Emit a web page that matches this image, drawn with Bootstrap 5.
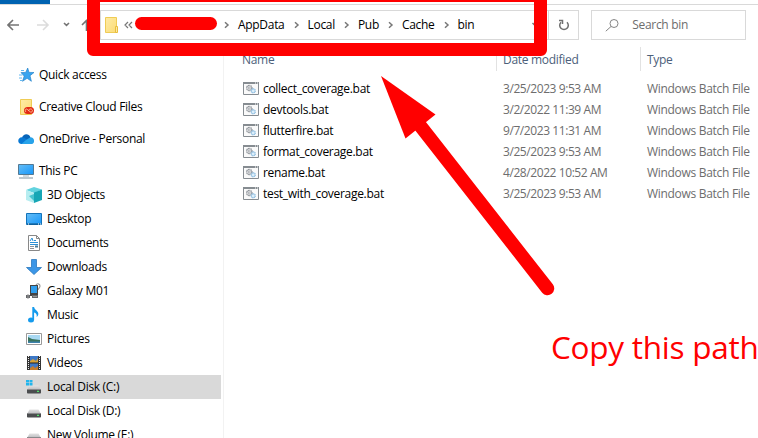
<!DOCTYPE html>
<html lang="en">
<head>
<meta charset="utf-8">
<meta name="viewport" content="width=device-width, initial-scale=1">
<title>bin</title>
<link href="https://cdn.jsdelivr.net/npm/bootstrap@5.3.0/dist/css/bootstrap.min.css" rel="stylesheet">
<style>
body{width:758px;height:438px;overflow:hidden;background:#fff;color:#000;font:12px/16px "Open Sans","Noto Sans",sans-serif;letter-spacing:-.3px;white-space:nowrap}
svg{display:block;flex:none}
.tabline{height:5px;border-bottom:1px solid #d9d9d9}
.tabline span{width:50px;height:4px;background:#0063b1}
.toolbar{height:42px;padding:5px 12px 7px 0}
.history{width:100px;padding-left:7px}
.address{width:450px;border:1px solid #d9d9d9;padding-left:4px}
.masked{width:82px;height:13px;border-radius:7px;background:red;margin:-4px 7px 0 0}
.crumb{margin-right:9px}
.sep{margin-right:8px}
.reload{width:30px;border:1px solid #d9d9d9;border-left:0}
.finder{width:155px;margin-left:12px;border:1px solid #d9d9d9;color:#6d6d6d;padding-left:13px}
.places{width:224px;height:391px;padding-top:16px;border-right:1px solid #f2f2f2}
.place{height:24px;width:221px;padding-left:18px;gap:5px}
.place.root{margin-bottom:8px}
.place.root.pc{margin-bottom:0}
.place.sub{padding-left:26px}
.place.current{background:#d9d9d9}
.heads{height:24px;color:#4c607a;margin-bottom:7px}
.heads>div{padding-top:5px}
.c-name{width:273px;padding-left:19px}
.c-date{width:144px;padding-left:6px}
.c-type{padding-left:6px}
.heads .c-name{padding-left:18px}
.heads .c-name,.heads .c-date{border-right:1px solid #e2e2e2}
.file{height:21px;color:#6d6d6d}
.file .c-name{color:#000;gap:4px}
.file .c-date{letter-spacing:-.42px}
.frame{left:87px;top:-11px;width:460px;height:67px;border:13px solid red;border-radius:6px}
.pointer{left:0;top:0}
.note{left:551px;top:325px;font-size:31.5px;line-height:44px;color:red;letter-spacing:-.25px}
</style>
</head>
<body class="position-relative">
<svg width="0" height="0" class="position-absolute" aria-hidden="true">
<defs>
<linearGradient id="fold" x1="0" y1="0" x2="1" y2="1"><stop stop-color="#ffeba5"/><stop offset="1" stop-color="#fbdc77"/></linearGradient>
<linearGradient id="blue" x1="0" y1="0" x2="1" y2="1"><stop stop-color="#66bdf5"/><stop offset="1" stop-color="#1597fb"/></linearGradient>
<linearGradient id="metal" x1="0" y1="0" x2="0" y2="1"><stop stop-color="#e3e3e3"/><stop offset="1" stop-color="#b9b9bd"/></linearGradient>
<symbol id="bat" viewBox="0 0 16 14"><path d="M.5.5h15v12H.5z" fill="#fafafa" stroke="#868c91"/><path d="M0 0h16v2H0z" fill="#868c91"/><path d="M12 1h1m1 0h1" stroke="#fff"/><circle cx="6.3" cy="6" r="2.6" fill="#eee" stroke="#858b92" stroke-width="1.4" stroke-dasharray="1 .5"/><circle cx="6.3" cy="6" r="1" fill="none" stroke="#8b9198" stroke-width=".6"/><circle cx="10.2" cy="8.8" r="2" fill="#dceefa" stroke="#80b5dc" stroke-width="1.2" stroke-dasharray="1 .4"/></symbol>
<symbol id="chev" viewBox="0 0 6 8"><path d="M1 1.2 4 4 1 6.8" fill="none" stroke="#777" stroke-width="1.5"/></symbol>
<symbol id="disk" viewBox="0 0 16 16"><path d="M3.500 6.500h9L15 11H1z" fill="url(#metal)"/><rect x="1" y="10" width="14" height="4.500" rx=".8" fill="#4b4d4f"/><path d="M1 10h14v1H1z" fill="#88898b"/><path d="M11 12.300h2" stroke="#50e66b" stroke-width="1.2"/></symbol>
</defs>
</svg>

<div class="tabline"><span class="d-block"></span></div>
<header class="toolbar d-flex">
  <div class="history d-flex align-items-center">
    <svg width="93" height="30" viewBox="7 10 93 30" fill="none" stroke="#747474" stroke-width="1.6"><path d="M8 25h11M13 20l-5 5 5 5"/><path d="M37 25h11M43 20l5 5-5 5" stroke="#dcdcdc"/><path d="M64 23l2.500 2.300L69 23"/><path d="M86.500 31V20.500M82 25l4.500-4.500L91 25"/></svg>
  </div>
  <div class="address d-flex align-items-center">
    <svg width="14" height="18" viewBox="0 0 14 18"><path d="M.5 1.500h11v15H.5z" fill="url(#fold)" stroke="#efcc55"/><path d="M10.500 10.500h2v6h-2z" fill="#ffe9a0" stroke="#e8bd3e"/></svg>
    <svg class="ms-1" width="12" height="10" viewBox="0 0 12 10"><path d="M5 2 2 5l3 3M9 2 6 5l3 3" fill="none" stroke="#777" stroke-width="1.2"/></svg>
    <span class="masked"></span>
    <svg class="sep" width="6" height="8"><use href="#chev"/></svg><span class="crumb">AppData</span>
    <svg class="sep" width="6" height="8"><use href="#chev"/></svg><span class="crumb">Local</span>
    <svg class="sep" width="6" height="8"><use href="#chev"/></svg><span class="crumb">Pub</span>
    <svg class="sep" width="6" height="8"><use href="#chev"/></svg><span class="crumb">Cache</span>
    <svg class="sep" width="6" height="8"><use href="#chev"/></svg><span>bin</span>
    <svg class="ms-auto me-2" width="9" height="6" viewBox="0 0 9 6"><path d="M1.500 1 4.500 4l3-3" fill="none" stroke="#777" stroke-width="1.500"/></svg>
  </div>
  <div class="reload d-flex align-items-center justify-content-center"><svg width="12" height="14" viewBox="0 0 12 14" fill="none" stroke="#707070" stroke-width="1.500"><path d="M9 4.200A4.300 4.300 0 1 1 3 4.200"/><path d="M1 2.500h3.500V6"/></svg></div>
  <div class="finder d-flex align-items-center"><svg width="15" height="14" viewBox="0 0 15 14" fill="none" stroke="#858585"><circle cx="9" cy="5.500" r="4"/><path d="M6 8.500.8 13.200"/></svg><span class="search-text ps-2 ms-1">Search bin</span></div>
</header>

<main class="d-flex">
<nav class="places">
  <div class="place root d-flex align-items-center"><svg width="16" height="16"><path d="m9.700 1 1.300 4.400 5 .1-4 3.200 1.400 5.600-4.300-3-4.600 3 1.700-5.200L3 5.600l4.700-.2z" fill="#38a4ef" stroke="#1679c4" stroke-width=".6"/><path d="M3 3.500h3M1 8h3.500M1 11h3M2 13.500h2" stroke="#62b9f2"/></svg><span>Quick access</span></div>
  <div class="place root d-flex align-items-center"><svg width="16" height="16"><path d="M2.500.5h11v15h-11z" fill="url(#fold)" stroke="#efcc55"/><rect x="6" y="8" width="10" height="7" rx="3.500" fill="#e32913"/><path d="M8 13c-1.700-1.500-.2-4 1.500-2.500l3 2.500c1.700.7 2.800-1.700 1-2.800-1.500-.7-2.500.5-3.300 1.500" fill="none" stroke="#ffd9b0" stroke-width=".8"/></svg><span>Creative Cloud Files</span></div>
  <div class="place root d-flex align-items-center"><svg width="16" height="16"><path d="M4 7C5 2.500 11 2 12.500 6.500L9 10z" fill="#0865b9"/><path d="M3.500 13C-.8 13-1 6.500 4 6.300c3 0 6 3 8 6.700z" fill="#0878d4"/><path d="M8 9l4.500-2.700C17 6.500 17.500 13 13 13H3.500z" fill="#28a3ea"/></svg><span>OneDrive - Personal</span></div>
  <div class="place root pc d-flex align-items-center"><svg width="16" height="16"><path d="M.5 1.500h15v10H.5z" fill="url(#blue)" stroke="#547992"/><path d="M5 13h6" stroke="#a5b5c0"/><path d="M1 15h14" stroke="#7d929f"/></svg><span>This PC</span></div>
  <div class="place sub d-flex align-items-center"><svg width="16" height="16"><path d="m0 3 8-3 8 2.500L8 6z" fill="#62d3df"/><path d="m0 3 8 3v10l-8-3z" fill="#b7edf0"/><path d="m16 2.500-8 3V16l8-3z" fill="#17a6b5"/><path d="m3 9 5-2v7z" fill="#49c4cf"/></svg><span>3D Objects</span></div>
  <div class="place sub d-flex align-items-center"><svg width="16" height="16"><path d="M.5 2.500h15v11H.5z" fill="url(#blue)" stroke="#1473b9"/><path d="M1 13h14" stroke="#0b5081"/><path d="M2 13h1m9 0h1m1 0h1" stroke="#fff"/></svg><span>Desktop</span></div>
  <div class="place sub d-flex align-items-center"><svg width="16" height="16"><path d="M2.500.5h8l3 3v12h-11z" fill="#fff" stroke="#888"/><path d="M10.500.5v3h3" fill="none" stroke="#888"/><path d="m4 6 2-3 1 3M8 5.500h2M4 7.500h8M4 9.500h8" fill="none" stroke="#2b91d7"/><path d="M4 11.500h4M4 13.500h4" stroke="#8b9299"/><path d="M9 10.500h3v2H9z" fill="#477b9b"/></svg><span>Documents</span></div>
  <div class="place sub d-flex align-items-center"><svg width="16" height="16"><path d="M5.500.5h5v8h5L8 15.500.5 8.500h5z" fill="#3b96e7" stroke="#2b79be" stroke-width=".8"/></svg><span>Downloads</span></div>
  <div class="place sub d-flex align-items-center"><svg width="16" height="16"><path d="M10 2c1-2 4-1.500 4 1 0 2-2 2.500-2 4" fill="none" stroke="#999" stroke-width="1.200"/><path d="M4 2h8v11H4z" fill="#444"/><path d="M5 3h6v7H5z" fill="#2f9eee"/><path d="M0 12h4v3H0zM6 12h6v3H6z" fill="#64676a"/><path d="M2 11v5M7 13.500h4" stroke="#999"/></svg><span>Galaxy M01</span></div>
  <div class="place sub d-flex align-items-center"><svg width="16" height="16"><ellipse cx="5" cy="13" rx="3" ry="2.500" fill="#159bed"/><path d="M6.300 13V0h1.800c.2 3 4.900 4 4.200 7.500-.2 1.200-.9 2-1.700 2.500.8-2.500-.8-4-2.500-4.500V13z" fill="#159bed"/></svg><span>Music</span></div>
  <div class="place sub d-flex align-items-center"><svg width="16" height="16"><path d="M.5 2.500h15v11H.5z" fill="#fff" stroke="#999"/><path d="M2 4h12v8H2z" fill="#a9d9f3"/><path d="m2 6 4 2 8 1v3H2z" fill="#39735c"/><path d="M2 10.500h12V12H2z" fill="#3e82ad"/></svg><span>Pictures</span></div>
  <div class="place sub d-flex align-items-center"><svg width="16" height="16"><path d="M1 1h14v14H1z" fill="#343434"/><path d="M4 1h8v14H4z" fill="#3e78c5"/><path d="m4 6 3-2 3 2 2-3v5H4z" fill="#d5a236"/><path d="m4 13 3-2 2 2 3-2v4H4z" fill="#c37b2b"/><path d="M4 8h8" stroke="#222"/><path d="M2.500 1v14m11-14v14" stroke="#eee" stroke-dasharray="1 1"/></svg><span>Videos</span></div>
  <div class="place sub current d-flex align-items-center"><svg width="16" height="16"><use href="#disk"/><path d="M0 1h3v2.500H0zM3.500 1h3v2.500h-3zM0 4h3v2.500H0zM3.500 4h3v2.500h-3z" fill="#20b5ed"/></svg><span>Local Disk (C:)</span></div>
  <div class="place sub d-flex align-items-center"><svg width="16" height="16"><use href="#disk"/></svg><span>Local Disk (D:)</span></div>
  <div class="place sub d-flex align-items-center"><svg width="16" height="16"><use href="#disk"/></svg><span>New Volume (E:)</span></div>
</nav>
<section class="flex-grow-1">
  <div class="heads d-flex"><div class="c-name">Name</div><div class="c-date">Date modified</div><div class="c-type">Type</div></div>
  <div class="file d-flex align-items-center"><div class="c-name d-flex align-items-center"><svg width="16" height="14"><use href="#bat"/></svg><span>collect_coverage.bat</span></div><div class="c-date">3/25/2023 9:53 AM</div><div class="c-type">Windows Batch File</div></div>
  <div class="file d-flex align-items-center"><div class="c-name d-flex align-items-center"><svg width="16" height="14"><use href="#bat"/></svg><span>devtools.bat</span></div><div class="c-date">3/2/2022 11:39 AM</div><div class="c-type">Windows Batch File</div></div>
  <div class="file d-flex align-items-center"><div class="c-name d-flex align-items-center"><svg width="16" height="14"><use href="#bat"/></svg><span>flutterfire.bat</span></div><div class="c-date">9/7/2023 11:31 AM</div><div class="c-type">Windows Batch File</div></div>
  <div class="file d-flex align-items-center"><div class="c-name d-flex align-items-center"><svg width="16" height="14"><use href="#bat"/></svg><span>format_coverage.bat</span></div><div class="c-date">3/25/2023 9:53 AM</div><div class="c-type">Windows Batch File</div></div>
  <div class="file d-flex align-items-center"><div class="c-name d-flex align-items-center"><svg width="16" height="14"><use href="#bat"/></svg><span>rename.bat</span></div><div class="c-date">4/28/2022 10:52 AM</div><div class="c-type">Windows Batch File</div></div>
  <div class="file d-flex align-items-center"><div class="c-name d-flex align-items-center"><svg width="16" height="14"><use href="#bat"/></svg><span>test_with_coverage.bat</span></div><div class="c-date">3/25/2023 9:53 AM</div><div class="c-type">Windows Batch File</div></div>
</section>
</main>

<div class="frame position-absolute"></div>
<svg class="pointer position-absolute" width="758" height="438"><path d="m381 76 54.500 38.500-30 24z" fill="red"/><path d="m411 114 136.500 174.500" stroke="red" stroke-width="13.500" stroke-linecap="round"/></svg>
<div class="note position-absolute">Copy this path</div>
<script src="https://cdn.jsdelivr.net/npm/bootstrap@5.3.0/dist/js/bootstrap.bundle.min.js"></script>
</body>
</html>
